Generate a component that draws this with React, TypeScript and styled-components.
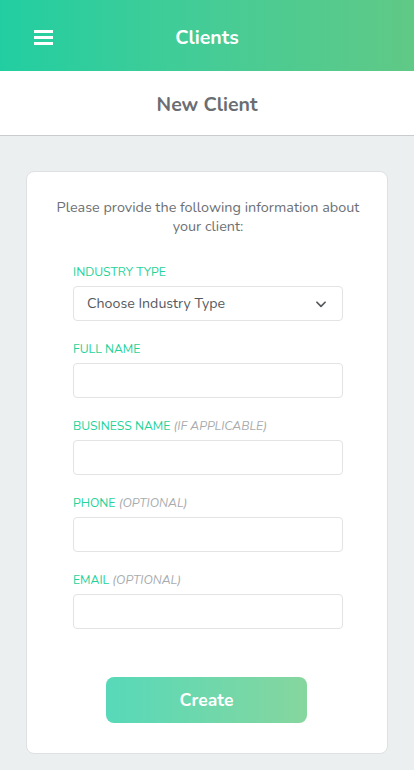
import React from "react";
import styled, { createGlobalStyle } from "styled-components";

const GlobalStyle = createGlobalStyle`
  html, body {
    margin: 0;
    padding: 0;
    background: #eceff0;
    font-family: "Nunito", Lato, "Noto Sans", sans-serif;
  }
  * { box-sizing: border-box; }
`;

type Field = {
  label: string;
  hint?: string;
};

const fields: Field[] = [
  { label: "Full Name" },
  { label: "Business Name", hint: "(if applicable)" },
  { label: "Phone", hint: "(optional)" },
  { label: "Email", hint: "(optional)" },
];

const App = () => {
  return (
    <Page>
      <GlobalStyle />
      <TopBar>
        <MenuButton aria-label="menu">
          <span />
          <span />
          <span />
        </MenuButton>
        <TopTitle>Clients</TopTitle>
      </TopBar>
      <SubHeader>New Client</SubHeader>
      <Body>
        <Card>
          <Intro>Please provide the following information about your client:</Intro>
          <Form>
            <FieldGroup>
              <Label>Industry Type</Label>
              <SelectBox>
                <span>Choose Industry Type</span>
                <svg width="14" height="14" viewBox="0 0 24 24" fill="none" stroke="#55595d" strokeWidth="3" strokeLinecap="round" strokeLinejoin="round">
                  <polyline points="5 9 12 16 19 9" />
                </svg>
              </SelectBox>
            </FieldGroup>
            {fields.map((f) => (
              <FieldGroup key={f.label}>
                <Label>
                  {f.label}
                  {f.hint && <Hint> {f.hint}</Hint>}
                </Label>
                <Input />
              </FieldGroup>
            ))}
          </Form>
          <CreateButton>Create</CreateButton>
        </Card>
      </Body>
    </Page>
  );
};

export default App;

const Page = styled.div`
  width: 414px;
  min-height: 770px;
  background: #eceff0;
`;

const TopBar = styled.header`
  position: relative;
  height: 71px;
  padding-top: 3px;
  display: flex;
  align-items: center;
  justify-content: center;
  background: linear-gradient(90deg, #22cea1 0%, #45cc96 50%, #60c986 100%);
`;

const MenuButton = styled.div`
  position: absolute;
  left: 34px;
  top: 30px;
  width: 19px;
  display: flex;
  flex-direction: column;
  gap: 3px;
  span {
    display: block;
    height: 3px;
    background: #fff;
  }
`;

const TopTitle = styled.h1`
  margin: 0;
  color: #fff;
  font-size: 19.5px;
  font-weight: 700;
`;

const SubHeader = styled.div`
  height: 65px;
  padding-top: 3px;
  display: flex;
  align-items: center;
  justify-content: center;
  background: #fff;
  border-bottom: 1px solid #c9cccf;
  color: #6a6e72;
  font-size: 19.5px;
  font-weight: 700;
`;

const Body = styled.main`
  padding: 35px 26px 16px;
`;

const Card = styled.section`
  background: #fff;
  border: 1px solid #dde1e3;
  border-radius: 8px;
  padding: 26px 44px 30px 46px;
  display: flex;
  flex-direction: column;
  align-items: center;
`;

const Intro = styled.p`
  margin: 0 -26px;
  text-align: center;
  color: #6c7074;
  font-size: 14.4px;
  line-height: 19px;
`;

const Form = styled.div`
  width: 100%;
  margin-top: 28px;
  display: flex;
  flex-direction: column;
  gap: 20px;
`;

const FieldGroup = styled.div`
  display: flex;
  flex-direction: column;
  gap: 6px;
`;

const Label = styled.label`
  color: #1fd39a;
  font-size: 12.2px;
  line-height: 16px;
  text-transform: uppercase;
`;

const Hint = styled.span`
  color: #a7abae;
  font-style: italic;
`;

const Input = styled.input`
  height: 35px;
  width: 100%;
  border: 1px solid #e1e3e5;
  border-radius: 4px;
  background: #fff;
  outline: none;
`;

const SelectBox = styled.div`
  height: 35px;
  display: flex;
  align-items: center;
  justify-content: space-between;
  padding: 0 14px 0 13px;
  border: 1px solid #e1e3e5;
  border-radius: 4px;
  color: #55595d;
  font-size: 14.2px;
`;

const CreateButton = styled.button`
  margin: 48px 3px 0 0;
  width: 201px;
  height: 46px;
  border: none;
  border-radius: 8px;
  background: linear-gradient(90deg, #57d9b9 0%, #86d69e 100%);
  color: #fff;
  font-family: inherit;
  font-size: 17.5px;
  font-weight: 700;
`;
